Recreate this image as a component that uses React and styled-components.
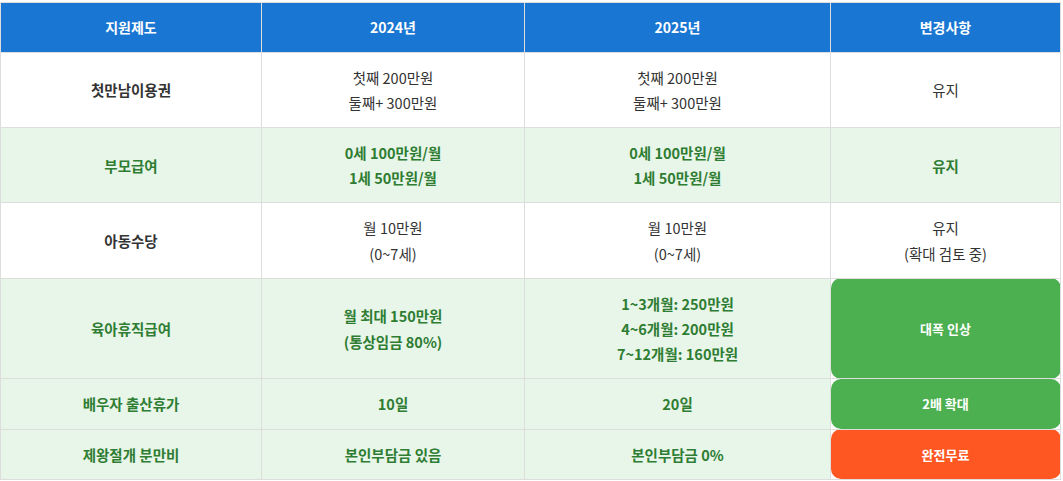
import React from "react";
import styled, { createGlobalStyle } from "styled-components";

const Global = createGlobalStyle`
  html, body { margin: 0; padding: 0; background: #fff; }
  body { font-family: "Noto Sans CJK KR", "Noto Sans", sans-serif; }
`;

const Page = styled.div`
  padding-top: 2px;
  width: 1060px;
`;

const Table = styled.table`
  width: 1060px;
  border-collapse: collapse;
  table-layout: fixed;
  font-size: 14.5px;
  color: #333;
  text-align: center;
`;

const HeadCell = styled.th`
  background: #1976d2;
  color: #fff;
  font-weight: 700;
  font-size: 14px;
  padding: 12px 8px;
  line-height: 24.6px;
  border: 1px solid #ddd;
`;

const Row = styled.tr``;

const Cell = styled.td`
  padding: 12px 8px;
  line-height: 25.2px;
  border: 1px solid #ddd;
  vertical-align: middle;
  background: ${(p) => (p.$green ? "#e8f5e9" : "#fff")};
  color: ${(p) => (p.$green ? "#2e7d32" : "#333")};
  font-weight: ${(p) => (p.$green || p.$label ? 700 : 400)};
`;

const BadgeCell = styled.td`
  padding: 12px 8px;
  line-height: 25.2px;
  border: 1px solid #ddd;
  vertical-align: middle;
  background: ${(p) => (p.$tone === "orange" ? "#ff5722" : "#4caf50")};
  color: #fff;
  font-weight: 700;
  font-size: 13px;
  border-radius: 10px;
`;

const Line = styled.div`
  white-space: nowrap;
`;

const rows = [
  { label: "첫만남이용권", a: ["첫째 200만원", "둘째+ 300만원"], b: ["첫째 200만원", "둘째+ 300만원"], c: ["유지"] },
  { green: true, label: "부모급여", a: ["0세 100만원/월", "1세 50만원/월"], b: ["0세 100만원/월", "1세 50만원/월"], c: ["유지"] },
  { label: "아동수당", a: ["월 10만원", "(0~7세)"], b: ["월 10만원", "(0~7세)"], c: ["유지", "(확대 검토 중)"] },
  { green: true, label: "육아휴직급여", a: ["월 최대 150만원", "(통상임금 80%)"], b: ["1~3개월: 250만원", "4~6개월: 200만원", "7~12개월: 160만원"], badge: "대폭 인상", tone: "green" },
  { green: true, label: "배우자 출산휴가", a: ["10일"], b: ["20일"], badge: "2배 확대", tone: "green" },
  { green: true, label: "제왕절개 분만비", a: ["본인부담금 있음"], b: ["본인부담금 0%"], badge: "완전무료", tone: "orange" },
];

const Lines = ({ items }) => items.map((t) => <Line key={t}>{t}</Line>);

export default function App() {
  return (
    <Page>
      <Global />
      <Table>
        <colgroup>
          <col style={{ width: 261 }} />
          <col style={{ width: 263 }} />
          <col style={{ width: 306 }} />
          <col style={{ width: 230 }} />
        </colgroup>
        <thead>
          <tr>
            <HeadCell>지원제도</HeadCell>
            <HeadCell>2024년</HeadCell>
            <HeadCell>2025년</HeadCell>
            <HeadCell>변경사항</HeadCell>
          </tr>
        </thead>
        <tbody>
          {rows.map((r) => (
            <Row key={r.label}>
              <Cell $green={r.green} $label>{r.label}</Cell>
              <Cell $green={r.green}><Lines items={r.a} /></Cell>
              <Cell $green={r.green}><Lines items={r.b} /></Cell>
              {r.badge ? (
                <BadgeCell $tone={r.tone}>{r.badge}</BadgeCell>
              ) : (
                <Cell $green={r.green}><Lines items={r.c} /></Cell>
              )}
            </Row>
          ))}
        </tbody>
      </Table>
    </Page>
  );
}
